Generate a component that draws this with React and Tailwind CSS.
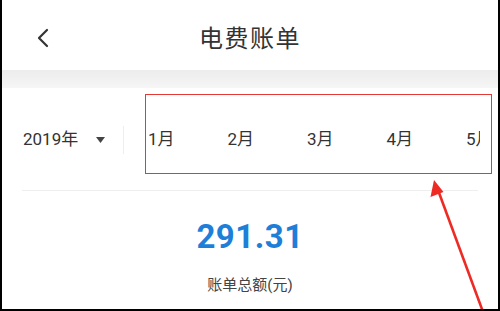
import React from 'react';

const months = ['1月', '2月', '3月', '4月', '5月', '6月'];

export default function App() {
  return (
    <div
      className="relative w-[500px] h-[311px] overflow-hidden bg-white border-x-2 border-b-2 border-black"
      style={{ fontFamily: 'Roboto, "Noto Sans CJK SC", sans-serif' }}
    >
      {/* header */}
      <div className="relative flex items-center justify-center h-[70px]">
        <svg className="absolute left-[34px] top-[28px]" width="14" height="20" viewBox="0 0 14 20" fill="none">
          <path d="M11 2 L3 10 L11 18" stroke="#333" strokeWidth="2.2" strokeLinecap="round" strokeLinejoin="round" />
        </svg>
        <h1 className="text-[24px] text-[#333] tracking-[1.5px] mt-[8px]">电费账单</h1>
      </div>

      <div className="h-[18px] bg-gradient-to-b from-[#ececec] to-[#f6f6f6]" />

      {/* year + months */}
      <div className="flex items-center h-[102px] pl-[21px] pt-[1px]">
        <div className="flex items-center w-[100px] shrink-0">
          <span className="text-[17px] text-[#333]">2019年</span>
          <svg className="ml-[18px]" width="9" height="6" viewBox="0 0 9 6">
            <path d="M0 0 L9 0 L4.5 6 Z" fill="#444" />
          </svg>
        </div>
        <div className="w-px h-[28px] bg-[#eeeeee]" />
        <div className="flex overflow-hidden w-[332px] ml-[24px]">
          {months.map((m) => (
            <span key={m} className="w-[79.5px] shrink-0 text-[17px] text-[#333]">{m}</span>
          ))}
        </div>
      </div>

      <div className="mx-[20px] h-px bg-[#eeeeee]" />

      {/* total */}
      <div className="flex flex-col items-center pt-[26px]">
        <div className="text-[33px] leading-[40px] font-bold text-[#1e7fd9] tracking-[0.5px]">291.31</div>
        <div className="mt-[17px] text-[15px] text-[#444]">账单总额(元)</div>
      </div>

      {/* annotations */}
      <div className="absolute left-[143px] top-[94px] w-[347px] h-[80px] border-[1.5px] border-[#e53935]" />
      <svg className="absolute left-0 top-0" width="500" height="311" viewBox="0 0 500 311">
        <line x1="436" y1="190" x2="484" y2="320" stroke="#ee2a24" strokeWidth="2.6" />
        <path d="M432 180 L428.5 197 L441.5 192 Z" fill="#ee2a24" />
      </svg>
    </div>
  );
}
